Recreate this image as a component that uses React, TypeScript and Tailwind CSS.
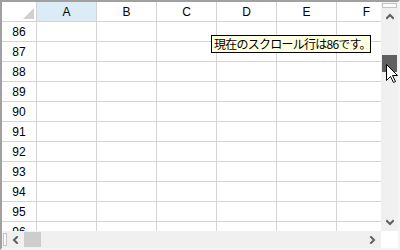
import React from 'react';

const cols = ['A', 'B', 'C', 'D', 'E', 'F'];
const rows = [86, 87, 88, 89, 90, 91, 92, 93, 94, 95, 96];

function Chevron({ dir }: { dir: 'up' | 'down' | 'left' | 'right' }) {
  const pts = {
    up: '1,5 4,2 7,5',
    down: '1,2 4,5 7,2',
    left: '5,1 2,4 5,7',
    right: '2,1 5,4 2,7',
  }[dir];
  return (
    <svg width="8" height="8" viewBox="0 0 8 8">
      <polyline points={pts} fill="none" stroke="#606060" strokeWidth="2" strokeLinecap="square" />
    </svg>
  );
}

export default function App() {
  return (
    <div className="relative w-[400px] h-[250px] bg-white border-t-2 border-l-2 border-b-2 border-r-2 border-t-[#a0a0a0] border-l-[#a0a0a0] border-b-[#f4f4f4] border-r-[#f4f4f4] flex flex-col overflow-hidden font-['Liberation_Sans',sans-serif] text-[12px] text-black">
      {/* grid + vertical scrollbar */}
      <div className="flex flex-1 min-h-0">
        <div className="flex-1 overflow-hidden">
          {/* column headers */}
          <div className="flex h-[20px] border-b border-[#d4d4d4]">
            <div className="w-[35px] shrink-0 border-r border-[#d4d4d4] flex items-end justify-end pr-[2px] pb-[2px]">
              <svg width="11" height="11" viewBox="0 0 11 11">
                <polygon points="11,0 11,11 0,11" fill="#d0d0d0" />
              </svg>
            </div>
            {cols.map((c, i) => (
              <div
                key={c}
                className={`w-[60px] shrink-0 border-r border-[#d4d4d4] flex items-center justify-center ${i === 0 ? 'bg-[#dcecf7]' : ''}`}
              >
                {c}
              </div>
            ))}
          </div>
          {rows.map((r) => (
            <div key={r} className="flex h-[20px] border-b border-[#d4d4d4]">
              <div className="w-[35px] shrink-0 border-r border-[#d4d4d4] flex items-center justify-center">{r}</div>
              {cols.map((c) => (
                <div key={c} className="w-[60px] shrink-0 border-r border-[#d4d4d4]" />
              ))}
            </div>
          ))}
        </div>
        {/* vertical scrollbar */}
        <div className="w-[17px] shrink-0 bg-[#f0f0f0] flex flex-col">
          <div className="mt-px mx-px h-[5px] border border-[#c4c4c4] bg-[#fbfbfb]" />
          <div className="h-[17px] flex items-center justify-center"><Chevron dir="up" /></div>
          <div className="h-[30px]" />
          <div className="h-[17px] mx-px bg-[#606060]" />
          <div className="flex-1" />
          <div className="h-[17px] flex items-center justify-center"><Chevron dir="down" /></div>
        </div>
      </div>
      {/* horizontal scrollbar */}
      <div className="flex h-[17px] shrink-0">
        <div className="flex-1 bg-[#f0f0f0] flex">
          <div className="ml-px my-[2px] w-[4px] border border-[#c4c4c4] bg-[#fbfbfb]" />
          <div className="w-[17px] flex items-center justify-center"><Chevron dir="left" /></div>
          <div className="w-[17px] my-px bg-[#cdcdcd]" />
          <div className="flex-1" />
          <div className="w-[17px] flex items-center justify-center"><Chevron dir="right" /></div>
        </div>
        <div className="w-[17px] bg-white" />
      </div>

      {/* tooltip */}
      <div className="absolute left-[209px] top-[33px] w-[160px] h-[18px] border border-black bg-[#ffffe1] flex items-center pl-[2px] font-['Noto_Sans_CJK_JP',sans-serif] text-[12px] tracking-[-0.75px] leading-none whitespace-nowrap">
        現在のスクロール行は86です。
      </div>

      {/* mouse cursor */}
      <svg className="absolute left-[384px] top-[62px]" width="13" height="20" viewBox="0 0 13 20">
        <path d="M0.5 0.5 L0.5 16.5 L4.5 12.5 L7.5 18.5 L9.5 17.5 L6.5 11.5 L11.5 11.5 Z" fill="white" stroke="black" strokeWidth="1" strokeLinejoin="miter" />
      </svg>
    </div>
  );
}
